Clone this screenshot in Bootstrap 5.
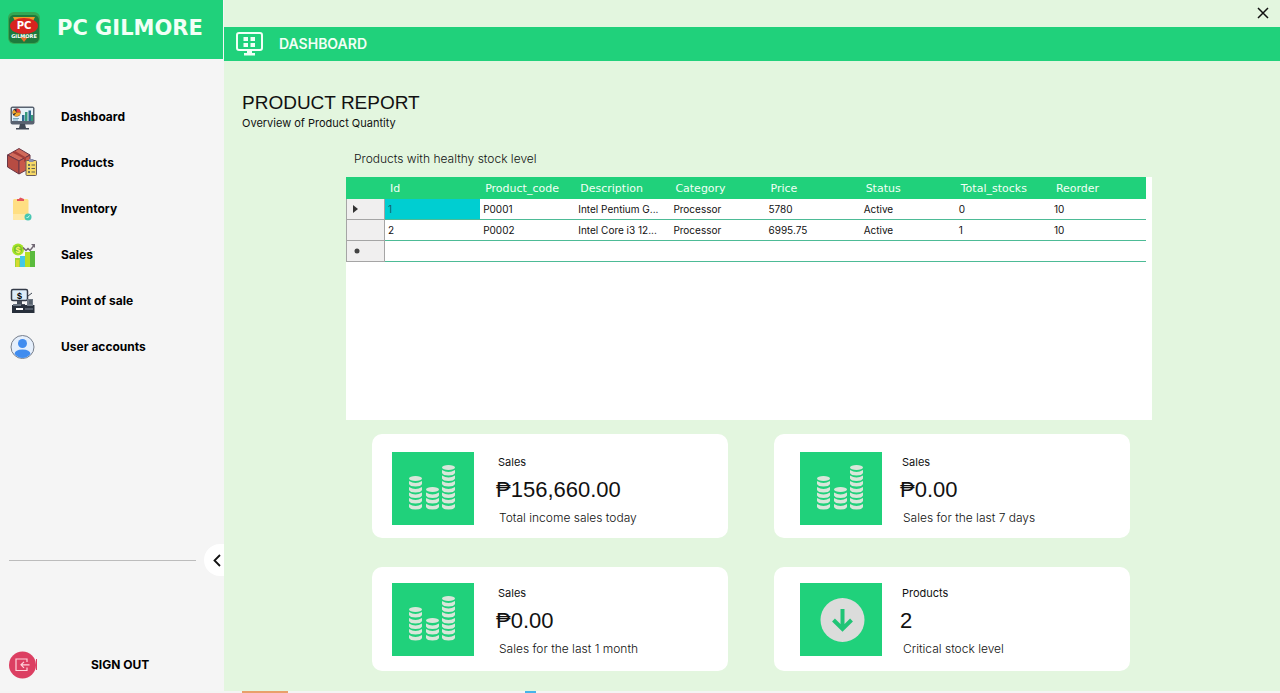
<!DOCTYPE html>
<html lang="en">
<head>
<meta charset="utf-8">
<meta name="viewport" content="width=device-width, initial-scale=1">
<title>PC Gilmore - Dashboard</title>
<link href="https://cdn.jsdelivr.net/npm/bootstrap@5.3.0/dist/css/bootstrap.min.css" rel="stylesheet">
<style>
  :root { --brand: #20d17b; --mint: #e3f6df; }
  body { font-family: "Inter", "Liberation Sans", sans-serif; font-size: 12px; line-height: 16px; color: #111; background: var(--mint); }
  svg { display: block; flex: none; }
  .side { width: 224px; background: #f5f5f5; }
  .side-brand { height: 59px; background: var(--brand); margin-right: 1px; padding: 0 0 3px 8px; gap: 17px; }
  .brand-name { font: bold 21px/24px "DejaVu Sans", sans-serif; color: #f2fff6; }
  .side-menu { padding-top: 35px; }
  .side-menu a { height: 46px; padding-left: 7px; gap: 22px; color: #000; font-weight: 700; font-size: 12px; text-decoration: none; }
  .side-rule { height: 1px; background: #bcbcbc; margin: 0 8px 0 9px; }
  .side-toggle { width: 20px; height: 32px; padding: 0 0 0 7px; border: 0; border-radius: 16px 0 0 16px; background: #fff; }
  .side-exit { padding: 0 0 11px 8px; margin-top: 74px; gap: 53px; border: 0; background: none; font-weight: 700; font-size: 12px; color: #000; }
  .win-bar { height: 27px; padding: 0 7px 2px 0; }
  .win-close { border: 0; background: none; padding: 4px; }
  .page-bar { height: 34px; background: var(--brand); color: #f2fff6; padding-left: 12px; gap: 16px; font-weight: 600; font-size: 14px; }
  .report-head { padding: 30px 18px 0; }
  .report-head h1 { font: 19px/24px "Liberation Sans", sans-serif; margin: 0; }
  .report-head div { font-size: 11px; }
  .report-body { padding: 20px 128px 20px 122px; }
  .grid-label { padding-left: 8px; margin-bottom: 10px; font-weight: 300; }
  .grid-panel { background: #fff; min-height: 243px; padding-right: 6px; }
  .stock-grid { width: 100%; table-layout: fixed; border-collapse: separate; border-spacing: 0; font-size: 10px; line-height: 20px; }
  .stock-grid thead th { background: var(--brand); color: #f2fff6; font: 11px/20px "DejaVu Sans", sans-serif; padding: 2px 0 0 5px; }
  .stock-grid td { border-bottom: 1px solid #4dbb96; padding: 0 0 0 3px; height: 21px; white-space: nowrap; overflow: hidden; }
  .stock-grid tbody th { background: #f0efef; border: 1px solid #a5a5a5; border-top: 0; padding: 0 0 0 6px; }
  .stock-grid .picked { background: #00ced1; color: #17606a; }
  .col-mark { width: 39px; }
  .stats { padding: 14px 22px 0 26px; display: grid; grid-template-columns: 1fr 1fr; gap: 29px 46px; }
  .stat { background: #fff; border-radius: 10px; height: 104px; padding-left: 20px; gap: 24px; }
  .stat-right { padding-left: 26px; gap: 20px; }
  .stat-top { padding-top: 4px; }
  .tile { width: 82px; height: 73px; background: var(--brand); }
  .stat-copy { line-height: 28px; padding-top: 4px; }
  .stat-name { font-size: 11px; }
  .stat-sum { font: 22px/28px "Liberation Sans", sans-serif; margin: 0 0 0 -2px; }
  .stat-note { padding-left: 1px; font-weight: 300; }
  .edge { height: 2px; background: #f4f4f4; padding-left: 242px; gap: 237px; }
  .edge span { height: 2px; width: 46px; background: #e9a06a; }
  .edge span + span { width: 11px; background: #45b4ea; }
</style>
</head>
<body>
<svg width="0" height="0" class="position-absolute" aria-hidden="true">
  <defs>
    <g id="coin"><ellipse cx="6.5" cy="2.5" rx="6.5" ry="2.5"/></g>
    <path id="disc" d="M0 0Q6.5 4 13 0V3Q12 5.500 6.500 5.500T0 3Z"/>
    <g id="coins" fill="#d9e6da">
      <use href="#coin" x="17" y="24"/><use href="#coin" x="34" y="35"/><use href="#coin" x="50" y="13"/>
      <use href="#disc" x="17" y="29"/><use href="#disc" x="17" y="35"/><use href="#disc" x="17" y="40.500"/><use href="#disc" x="17" y="46"/><use href="#disc" x="17" y="52"/>
      <use href="#disc" x="34" y="40.500"/><use href="#disc" x="34" y="46"/><use href="#disc" x="34" y="52"/>
      <use href="#disc" x="50" y="18"/><use href="#disc" x="50" y="23.500"/><use href="#disc" x="50" y="29"/><use href="#disc" x="50" y="35"/><use href="#disc" x="50" y="40.500"/><use href="#disc" x="50" y="46"/><use href="#disc" x="50" y="52"/>
    </g>
  </defs>
</svg>

<div class="d-flex flex-column min-vh-100">
<div class="d-flex flex-grow-1">
  <aside class="side d-flex flex-column flex-shrink-0">
    <div class="side-brand d-flex align-items-center">
      <svg width="32" height="32" viewBox="0 0 32 32" aria-hidden="true">
        <rect x="0" y="0" width="32" height="32" rx="6" fill="#34a853"/><rect x="1" y="3" width="30" height="28" rx="5" fill="#1d7a3c"/>
        <path d="M5 5H27L25 9H7Z" fill="#ef9a27"/><ellipse cx="16" cy="14" rx="14" ry="8" fill="#d8231f"/>
        <path d="M12 25L16 30L20 25Z" fill="#e2702a"/>
        <g font-family="DejaVu Sans" font-weight="bold" fill="#fff" text-anchor="middle"><text x="16" y="17" font-size="10">PC</text><text x="16" y="26" font-size="5">GILMORE</text></g>
      </svg>
      <span class="brand-name">PC GILMORE</span>
    </div>
    <nav class="side-menu d-flex flex-column">
      <a href="#" class="d-flex align-items-center">
        <svg width="32" height="32" viewBox="0 0 32 32"><rect x="3.500" y="5.500" width="24" height="18" rx="2" fill="#596270"/><rect x="5" y="7" width="21" height="13" fill="#e6f1f8"/><path d="M13 23h5l1 4h3v1.500H9V27h3z" fill="#414955"/><circle cx="9.500" cy="11.500" r="4" fill="#292c35"/><path d="M9.500 11.500V7.500A4 4 0 0 1 13.500 11.500z" fill="#e34141"/><path d="M9.500 11.500H13.500A4 4 0 0 1 7 14.500z" fill="#f5a72b"/><path d="M9.500 11.500L6 13A4 4 0 0 1 7 8.500z" fill="#f5a72b"/><path d="M15 14h2.500v6H15zM21.500 9.500H24V20h-2.500z" fill="#2c6990"/><path d="M18 11h2.500v9H18zM24 14h2v6h-2z" fill="#35997a"/><path d="M6 17.500h6M6 19h5" stroke="#78a6bd"/></svg>
        Dashboard</a>
      <a href="#" class="d-flex align-items-center">
        <svg width="32" height="32" viewBox="0 0 32 32"><g stroke="#6a3746" stroke-linejoin="round"><path d="M0.500 8L12 1.500 23 8 12 14z" fill="#d0695a"/><path d="M0.500 8L12 14V27L0.500 20z" fill="#b74c43"/><path d="M12 14L23 8V21L12 27z" fill="#c9584a"/><path d="M5 5.500L17 11.500V15L19 14V10.500L8 4z" fill="#a33c38" stroke="none"/></g><rect x="19" y="13.500" width="10.500" height="15" rx="1" fill="#f6d866" stroke="#695b5d"/><rect x="22" y="12" width="4.500" height="3" fill="#8a8daa"/><path d="M21 18h2M21 21.500h2M21 25h2" stroke="#3f4d5a" stroke-width="1.500"/><path d="M24.500 18h3.500M24.500 21.500h3.500M24.500 25h3.500" stroke="#65604e"/></svg>
        Products</a>
      <a href="#" class="d-flex align-items-center">
        <svg width="32" height="32" viewBox="0 0 32 32"><rect x="6" y="6" width="15.500" height="21" rx="1.500" fill="#ffdf83"/><path d="M6 21h15.500v6H7.500L6 25.500z" fill="#ffe9a8"/><path d="M10 8V6H12Q13 3.500 14.500 5L17 6V8z" fill="#e3545c"/><circle cx="21" cy="24" r="3.500" fill="#48c7b1"/><path d="M19.500 24l1 1 2-2.500" fill="none" stroke="#c8fff0"/></svg>
        Inventory</a>
      <a href="#" class="d-flex align-items-center">
        <svg width="32" height="32" viewBox="0 0 32 32"><path d="M8 19h5v9H8z" fill="#9ed636"/><path d="M9 21h3v7H9z" fill="#d6d930"/><path d="M13 17h5v11h-5z" fill="#43c9e9"/><path d="M18 13h5v15h-5z" fill="#b7df25"/><path d="M23 12h5v16h-5z" fill="#5abb3d"/><circle cx="11" cy="10.500" r="6" fill="#a5e326"/><circle cx="11" cy="10.500" r="4" fill="#79c42a"/><text x="11" y="14" font-size="9" font-family="Liberation Sans" fill="#fff36a" text-anchor="middle">$</text><path d="M16 8.500l3 3 2-2 2 2 4-5" fill="none" stroke="#716874" stroke-width="1.500"/><path d="M24 5h4v4z" fill="#716874"/></svg>
        Sales</a>
      <a href="#" class="d-flex align-items-center">
        <svg width="32" height="32" viewBox="0 0 32 32"><rect x="4.500" y="4.500" width="16" height="11" rx="1.500" fill="#dcecf8" stroke="#343b48" stroke-width="1.500"/><path d="M10 16h5v3h3v2H8v-2h2z" fill="#454d59"/><path d="M5 20H27.500V28H5z" fill="#272f3b"/><path d="M6 19h8v2H6zM20 14h6v7h-6z" fill="#6e7884"/><path d="M21 11l4-3M22 16h3M22 18h3" stroke="#3f4955"/><path d="M9 23h7v2H9z" fill="#fff"/><path d="M18 24h8" stroke="#818b98"/><text x="12.500" y="13.500" font-size="9" font-weight="bold" font-family="Liberation Sans" text-anchor="middle">$</text></svg>
        Point of sale</a>
      <a href="#" class="d-flex align-items-center">
        <svg width="32" height="32" viewBox="0 0 32 32"><circle cx="15.500" cy="16" r="11.500" fill="#e5effc" stroke="#777f8c"/><circle cx="15.500" cy="12.500" r="4.500" fill="#408cef"/><path d="M7.500 23Q8 18.500 15.500 18.500T23.500 23Q20 27 15.500 27T7.500 23z" fill="#408cef"/></svg>
        User accounts</a>
    </nav>
    <div class="mt-auto d-flex align-items-center">
      <div class="side-rule flex-grow-1"></div>
      <button class="side-toggle" type="button" aria-label="Collapse menu"><svg width="12" height="14" viewBox="0 0 12 14"><path d="M9 2L3.500 7.500 9 13" fill="none" stroke="#111" stroke-width="1.800"/></svg></button>
    </div>
    <button class="side-exit d-flex align-items-center" type="button">
      <svg width="30" height="30" viewBox="0 0 30 30"><circle cx="14.500" cy="15" r="13.500" fill="#dc3f62"/><path d="M28.500 9v11" stroke="#dc3f62"/><path d="M19 12V9H8V20.500H19V17.500M21.500 14.800H13M16 11.800L13 14.800 16 17.800" fill="none" stroke="#ffd3dc" stroke-width="1.200"/></svg>
      SIGN OUT
    </button>
  </aside>

  <main class="flex-grow-1">
    <div class="win-bar d-flex align-items-center justify-content-end">
      <button class="win-close" type="button" aria-label="Close"><svg width="12" height="12" viewBox="0 0 12 12"><path d="M1 1L11 11M11 1L1 11" stroke="#111" stroke-width="1.500"/></svg></button>
    </div>
    <div class="page-bar d-flex align-items-center">
      <svg width="27" height="24" viewBox="0 0 27 24"><rect x="1" y="1" width="25" height="17" rx="2" fill="none" stroke="#f2fff6" stroke-width="2"/><path d="M11 18h5v3h3v2.500H8V21h3zM7.500 5h4.500v4H7.500zM14.500 5H19v4h-4.500zM7.500 11H12v4H7.500zM14.500 11H19v4h-4.500z" fill="#f2fff6"/></svg>
      <span>DASHBOARD</span>
    </div>
    <header class="report-head">
      <h1>PRODUCT REPORT</h1>
      <div>Overview of Product Quantity</div>
    </header>
    <div class="report-body">
      <div class="grid-label">Products with healthy stock level</div>
      <div class="grid-panel">
        <table class="stock-grid">
          <thead><tr><th class="col-mark" aria-label="Row"></th><th>Id</th><th>Product_code</th><th>Description</th><th>Category</th><th>Price</th><th>Status</th><th>Total_stocks</th><th>Reorder</th></tr></thead>
          <tbody>
            <tr><th scope="row" aria-label="Current row"><svg width="5" height="8" viewBox="0 0 5 8"><path d="M0 0L5 4 0 8z" fill="#333"/></svg></th><td class="picked">1</td><td>P0001</td><td>Intel Pentium G...</td><td>Processor</td><td>5780</td><td>Active</td><td>0</td><td>10</td></tr>
            <tr><th></th><td>2</td><td>P0002</td><td>Intel Core i3 12...</td><td>Processor</td><td>6995.75</td><td>Active</td><td>1</td><td>10</td></tr>
            <tr><th scope="row" aria-label="New row"><svg width="8" height="6" viewBox="0 0 8 6"><circle cx="4" cy="3" r="2.500" fill="#444"/></svg></th><td></td><td></td><td></td><td></td><td></td><td></td><td></td><td></td></tr>
          </tbody>
        </table>
      </div>
      <section class="stats">
        <div class="stat stat-top d-flex align-items-center">
          <svg class="tile" viewBox="0 0 82 73"><use href="#coins"/></svg>
          <div class="stat-copy"><div class="stat-name">Sales</div><p class="stat-sum">₱156,660.00</p><div class="stat-note">Total income sales today</div></div>
        </div>
        <div class="stat stat-top stat-right d-flex align-items-center">
          <svg class="tile" viewBox="0 0 82 73"><use href="#coins"/></svg>
          <div class="stat-copy"><div class="stat-name">Sales</div><p class="stat-sum">₱0.00</p><div class="stat-note">Sales for the last 7 days</div></div>
        </div>
        <div class="stat d-flex align-items-center">
          <svg class="tile" viewBox="0 0 82 73"><use href="#coins"/></svg>
          <div class="stat-copy"><div class="stat-name">Sales</div><p class="stat-sum">₱0.00</p><div class="stat-note">Sales for the last 1 month</div></div>
        </div>
        <div class="stat stat-right d-flex align-items-center">
          <svg class="tile" viewBox="0 0 82 73"><circle cx="42.500" cy="37" r="22" fill="#dbdcdb"/><path d="M42.500 26V46M33.500 37L42.500 46 51.500 37" fill="none" stroke="#20c476" stroke-width="4"/></svg>
          <div class="stat-copy"><div class="stat-name">Products</div><p class="stat-sum">2</p><div class="stat-note">Critical stock level</div></div>
        </div>
      </section>
    </div>
  </main>
</div>
<div class="edge d-flex"><span></span><span></span></div>
</div>
<script src="https://cdn.jsdelivr.net/npm/bootstrap@5.3.0/dist/js/bootstrap.bundle.min.js"></script>
</body>
</html>
